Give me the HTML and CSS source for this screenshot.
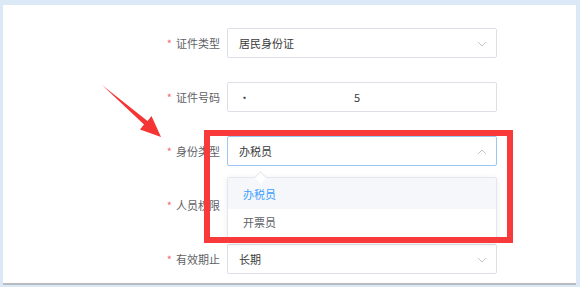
FILE: index.html
```html
<!DOCTYPE html>
<html lang="zh">
<head>
<meta charset="utf-8">
<link rel="stylesheet" href="styles.css">
</head>
<body>
<div class="panel">
  <div class="form">
    <div class="row">
      <div class="label"><span class="req">*</span>证件类型</div>
      <div class="input"><span class="val">居民身份证</span><svg class="chev" width="10" height="6" viewBox="0 0 10 6"><path d="M1 1 L5 5 L9 1" fill="none" stroke="#c0c4cc" stroke-width="1"/></svg></div>
    </div>
    <div class="row">
      <div class="label"><span class="req">*</span>证件号码</div>
      <div class="input"><span class="val dot">·</span><span class="val five">5</span></div>
    </div>
    <div class="row">
      <div class="label"><span class="req">*</span>身份类型</div>
      <div class="input focus"><span class="val">办税员</span><svg class="chev" width="10" height="6" viewBox="0 0 10 6"><path d="M1 5 L5 1 L9 5" fill="none" stroke="#c0c4cc" stroke-width="1"/></svg></div>
    </div>
    <div class="row">
      <div class="label"><span class="req">*</span>人员权限</div>
      <div class="input"></div>
    </div>
    <div class="row">
      <div class="label"><span class="req">*</span>有效期止</div>
      <div class="input"><span class="val">长期</span><svg class="chev" width="10" height="6" viewBox="0 0 10 6"><path d="M1 1 L5 5 L9 1" fill="none" stroke="#c0c4cc" stroke-width="1"/></svg></div>
    </div>
  </div>
  <div class="dropdown">
    <span class="caret"></span>
    <div class="opt active">办税员</div>
    <div class="opt">开票员</div>
  </div>
  <div class="redbox"></div>
</div>
<svg class="arrow" width="580" height="287" viewBox="0 0 580 287">
  <polygon points="102,85 147.5,121 151.5,116 161,137 140,129.5 144,124.5" fill="#f53434"/>
</svg>
</body>
</html>
```
FILE: styles.css
```css
html, body {
  margin: 0;
  padding: 0;
}
body {
  width: 580px;
  height: 287px;
  background: #dbe8f6;
  font-family: "Noto Sans CJK SC", "Noto Sans", sans-serif;
  font-size: 11px;
  color: #606266;
  position: relative;
  overflow: hidden;
}
.panel {
  position: relative;
  margin: 5px 4px 0 3px;
  height: 278px;
  background: #fff;
  border-bottom: 2px solid #b9bcbf;
}
.form {
  padding-top: 23px;
  display: flex;
  flex-direction: column;
  gap: 24px;
}
.row {
  display: flex;
  align-items: center;
  height: 30px;
}
.label {
  width: 224px;
  padding-right: 7px;
  box-sizing: border-box;
  text-align: right;
  color: #606266;
}
.req {
  color: #f56c6c;
  margin-right: 4px;
}
.input {
  position: relative;
  width: 270px;
  height: 30px;
  box-sizing: border-box;
  border: 1px solid #dcdfe6;
  border-radius: 2px;
  display: flex;
  align-items: center;
  padding-left: 11px;
  color: #303133;
}
.input.focus {
  border-color: #9cc7ef;
}
.val {
  color: #3a3a3a;
}
.five {
  margin-left: 104px;
}
.chev {
  position: absolute;
  right: 9px;
  top: 12px;
}
.dropdown {
  position: absolute;
  left: 224px;
  top: 172px;
  width: 270px;
  height: 66px;
  box-sizing: border-box;
  background: #fff;
  border: 1px solid #e4e7ed;
  border-radius: 2px;
  box-shadow: 0 1px 6px rgba(0,0,0,0.08);
}
.caret {
  position: absolute;
  left: 28px;
  top: -5px;
  width: 8px;
  height: 8px;
  background: #fff;
  border-left: 1px solid #e4e7ed;
  border-top: 1px solid #e4e7ed;
  transform: rotate(45deg);
}
.opt {
  height: 27px;
  line-height: 27px;
  padding-left: 15px;
  color: #606266;
}
.opt.active {
  height: 31px;
  line-height: 33px;
  background: #f5f7fa;
  color: #409eff;
}
.redbox {
  position: absolute;
  left: 201px;
  top: 125px;
  width: 309px;
  height: 113px;
  box-sizing: border-box;
  border: 6px solid #f83a3a;
}
.arrow {
  position: absolute;
  left: 0;
  top: 0;
  pointer-events: none;
}
```
